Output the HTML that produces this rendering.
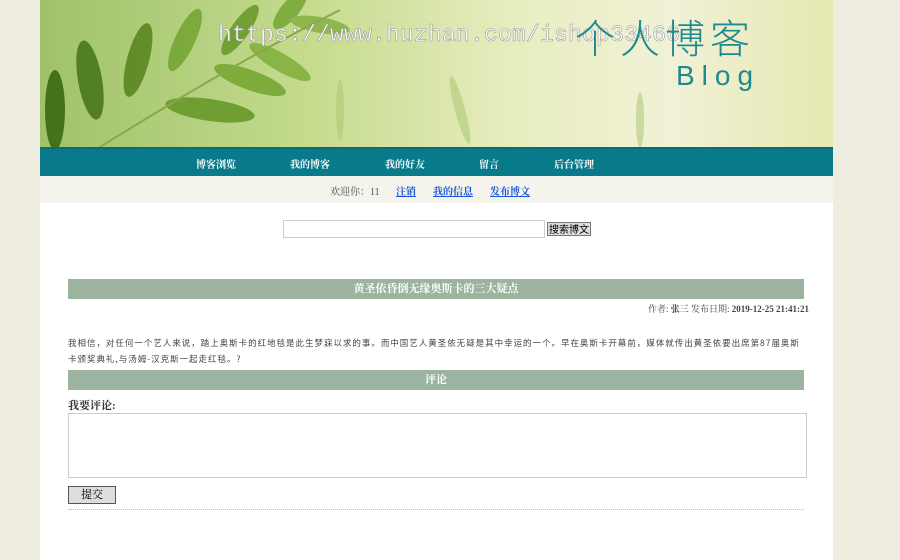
<!DOCTYPE html>
<html><head><meta charset="utf-8"><style>
*{margin:0;padding:0;box-sizing:border-box}
body{width:900px;height:560px;overflow:hidden;background:#efece0;font-family:"Liberation Serif","Noto Serif CJK SC","Noto Sans CJK SC",serif;}
#wrap{position:absolute;left:40px;top:0;width:793px;height:560px;background:#fff}
#banner{position:absolute;left:0;top:0;width:793px;height:147px;background:linear-gradient(90deg,#9fc269 0%,#c6dc8f 35%,#e8edc0 60%,#f1f1d6 80%,#e6e8b0 100%);overflow:hidden}
#nav{position:absolute;top:147px;left:0;width:793px;height:29px;background:#087a8a;border-top:2px solid #0a6c7a}
#nav span{position:absolute;top:7px;color:#fff;font-size:10px;font-weight:bold}
#sub{position:absolute;top:176px;left:0;width:793px;height:27px;background:#f4f3ec;font-size:10px}
#sub span{position:absolute;top:7px}
a{color:#1a55d6;font-weight:bold;text-decoration:underline}
.bar{position:absolute;left:28px;width:736px;background:#9cb49f;color:#fff;font-weight:bold;font-size:11px;text-align:center}
</style></head><body>
<div id="wrap">
<div id="banner">
<svg width="793" height="147" style="position:absolute;left:0;top:0">
<g opacity=".95">
<ellipse cx="50" cy="80" rx="12" ry="40" transform="rotate(-10 50 80)" fill="#4f7c1f"/>
<ellipse cx="98" cy="60" rx="11" ry="38" transform="rotate(15 98 60)" fill="#5e8a24"/>
<ellipse cx="15" cy="110" rx="10" ry="40" fill="#3f6e18"/>
<ellipse cx="145" cy="40" rx="10" ry="34" transform="rotate(25 145 40)" fill="#7aa83a"/>
<ellipse cx="200" cy="30" rx="9" ry="30" transform="rotate(35 200 30)" fill="#6f9e30"/>
<ellipse cx="210" cy="80" rx="38" ry="10" transform="rotate(20 210 80)" fill="#7aaa38"/>
<ellipse cx="170" cy="110" rx="45" ry="11" transform="rotate(8 170 110)" fill="#6c9c2e"/>
<ellipse cx="250" cy="10" rx="9" ry="24" transform="rotate(40 250 10)" fill="#7dab3e"/>
<ellipse cx="280" cy="25" rx="30" ry="8" transform="rotate(10 280 25)" fill="#8bb64a"/>
<ellipse cx="240" cy="62" rx="35" ry="9" transform="rotate(30 240 62)" fill="#86b444"/>
</g>
<path d="M60 147 C120 110 200 60 300 10" stroke="#8aa84a" stroke-width="2" fill="none"/>
<g fill="#a7c46d" opacity=".5"><ellipse cx="300" cy="110" rx="4" ry="30"/><ellipse cx="420" cy="110" rx="5" ry="35" transform="rotate(-15 420 110)"/><ellipse cx="600" cy="120" rx="4" ry="28"/></g>
</svg>
<div style="position:absolute;left:178px;top:22px;font-family:'Liberation Mono',monospace;font-size:23px;color:#fff;-webkit-text-stroke:0.6px #999;letter-spacing:0.2px">https://www.huzhan.com/ishop33466</div>
<div style="position:absolute;left:535px;top:14px;font-family:'Noto Sans CJK SC',sans-serif;font-size:40px;font-weight:300;color:#1f8a8e;letter-spacing:5px;line-height:44px">个人博客</div>
<div style="position:absolute;left:636px;top:60px;font-family:'Liberation Sans',sans-serif;font-size:28px;color:#1f8a8e;letter-spacing:7px">Blog</div>
</div>
<div id="nav"><span style="left:156px">博客浏览</span><span style="left:250px">我的博客</span><span style="left:345px">我的好友</span><span style="left:439px">留言</span><span style="left:514px">后台管理</span></div>
<div id="sub"><span style="left:290px;color:#555">欢迎你：11</span><span style="left:356px"><a>注销</a></span><span style="left:393px"><a>我的信息</a></span><span style="left:450px"><a>发布博文</a></span></div>
<div style="position:absolute;left:243px;top:220px;width:262px;height:18px;border:1px solid #ccc"></div>
<div style="position:absolute;left:507px;top:222px;width:44px;height:14px;background:#ddd;border:1px solid #777;font-size:10px;line-height:12px;text-align:center;color:#000;white-space:nowrap;overflow:hidden;font-family:'Noto Sans CJK SC',sans-serif">搜索博文</div>
<div class="bar" style="top:279px;height:20px;line-height:20px">黄圣依昏倒无缘奥斯卡的三大疑点</div>
<div style="position:absolute;right:24px;top:302px;font-size:9px;color:#444">作者: <b>张三</b> 发布日期: <b>2019-12-25 21:41:21</b></div>
<div style="position:absolute;left:28px;top:335px;width:760px;font-size:8.5px;line-height:16px;color:#444;letter-spacing:0.98px;white-space:nowrap;font-family:'Noto Sans CJK SC',sans-serif">我相信，对任何一个艺人来说，踏上奥斯卡的红地毯是此生梦寐以求的事。而中国艺人黄圣依无疑是其中幸运的一个。早在奥斯卡开幕前，媒体就传出黄圣依要出席第87届奥斯<br>卡颁奖典礼,与汤姆-汉克斯一起走红毯。?</div>
<div class="bar" style="top:370px;height:20px;line-height:20px">评论</div>
<div style="position:absolute;left:28px;top:397px;font-size:11px;font-weight:bold;color:#333">我要评论:</div>
<div style="position:absolute;left:28px;top:413px;width:739px;height:65px;border:1px solid #ccc"></div>
<div style="position:absolute;left:28px;top:486px;width:48px;height:18px;background:#ddd;border:1px solid #555;font-size:11px;line-height:16px;text-align:center">提交</div>
<div style="position:absolute;left:28px;top:509px;width:736px;border-top:1px dotted #bbb"></div>
</div>
</body></html>
